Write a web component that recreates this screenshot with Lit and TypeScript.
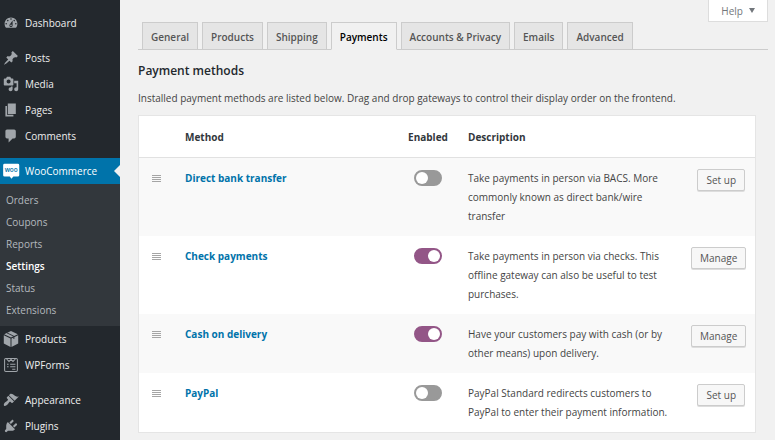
import { LitElement, html, svg, css, nothing } from "lit";
import { customElement, property, state } from "lit/decorators.js";
import { classMap } from "lit/directives/class-map.js";

const icons: Record<string, unknown> = {
  dashboard: svg`<path d="M3.76 16h12.48c1.1-1.37 1.76-3.11 1.76-5 0-4.42-3.58-8-8-8s-8 3.58-8 8c0 1.89.66 3.63 1.76 5zM10 4c.55 0 1 .45 1 1s-.45 1-1 1-1-.45-1-1 .45-1 1-1zM6 6c.55 0 1 .45 1 1s-.45 1-1 1-1-.45-1-1 .45-1 1-1zm8 0c.55 0 1 .45 1 1s-.45 1-1 1-1-.45-1-1 .45-1 1-1zm-5.37 5.55L12 7v6c0 1.1-.9 2-2 2s-2-.9-2-2c0-.57.24-1.08.63-1.45zM4 10c.55 0 1 .45 1 1s-.45 1-1 1-1-.45-1-1 .45-1 1-1zm12 0c.55 0 1 .45 1 1s-.45 1-1 1-1-.45-1-1 .45-1 1-1zm-5 3c0-.55-.45-1-1-1s-1 .45-1 1 .45 1 1 1 1-.45 1-1z"/>`,
  posts: svg`<path d="M10.44 3.02l1.82-1.82 6.36 6.35-1.83 1.82c-1.05-.68-2.48-.57-3.41.36l-.75.75c-.92.93-1.04 2.35-.35 3.41l-1.83 1.82-2.41-2.41-2.8 2.79c-.42.42-3.38 2.71-3.8 2.29s1.86-3.39 2.28-3.81l2.79-2.79L4.1 9.36l1.83-1.82c1.05.69 2.48.57 3.4-.36l.75-.75c.93-.92 1.05-2.35.36-3.41z"/>`,
  media: svg`<path fill-rule="evenodd" d="M13 11V4c0-.55-.45-1-1-1h-1.67L9 1H5L3.67 3H2c-.55 0-1 .45-1 1v7c0 .55.45 1 1 1h10c.55 0 1-.45 1-1zM7 4.5c1.38 0 2.5 1.12 2.5 2.5S8.38 9.5 7 9.5 4.5 8.38 4.5 7 5.62 4.5 7 4.5zM14 6h5v10.5c0 1.38-1.12 2.5-2.5 2.5S14 17.88 14 16.5s1.12-2.5 2.5-2.5c.17 0 .34.02.5.05V9h-3V6zm-4 8.05V13h2v3.5c0 1.38-1.12 2.5-2.5 2.5S7 17.88 7 16.5 8.12 14 9.5 14c.17 0 .34.02.5.05z"/>`,
  pages: svg`<path d="M6 15V2h10v13H6zm-1 1h8v2H3V5h2v11z"/>`,
  comments: svg`<path d="M5 2h9c1.1 0 2 .9 2 2v7c0 1.1-.9 2-2 2h-2l-5 5v-5H5c-1.1 0-2-.9-2-2V4c0-1.1.9-2 2-2z"/>`,
  products: svg`<path d="M10 0 18.5 4 10 8.2 1.5 4zM1 5.2 9.4 9.3V20L1 15.6zM19 5.2 10.6 9.3V20L19 15.6z"/><path d="M5 2.4 13.6 6.6V10" fill="none" stroke="#23282d" stroke-width="1.1"/>`,
  wpforms: svg`<g fill="none" stroke="currentColor" stroke-width="1.3"><rect x="2" y="2" width="16" height="16" rx="1.5"/><path d="M4.5 2.5 7.5 5.5 10 3 12.5 5.5 15.5 2.5M5 9h2M9 9h6.5M5 12.2h2M9 12.2h6.5M11.5 15.3h4"/></g>`,
  appearance: svg`<path d="M14.48 11.06L7.41 3.99l1.5-1.5c.5-.56 2.3-.47 3.51.32 1.21.8 1.43 1.28 2.91 2.1 1.18.64 2.45 1.26 4.45.85zm-.71.71L6.7 4.7 4.93 6.47c-.39.39-.39 1.02 0 1.41l1.06 1.06c.39.39.39 1.03 0 1.42-.6.6-1.43 1.11-2.21 1.69-.35.26-.7.53-1.01.84C1.43 14.23.4 16.08 1.4 17.07c.99 1 2.84-.03 4.18-1.36.31-.31.58-.66.85-1.02.57-.78 1.08-1.61 1.69-2.21.39-.39 1.02-.39 1.41 0l1.06 1.06c.39.39 1.02.39 1.41 0z"/>`,
  plugins: svg`<path d="M13.11 4.36L9.87 7.6 8 5.73l3.24-3.24c.35-.34 1.05-.2 1.56.32.52.51.66 1.21.31 1.55zm-8 1.77l.91-1.12 9.01 9.01-1.19.84c-.71.71-2.63 1.16-3.82 1.16H6.14L4.9 17.26c-.59.59-1.54.59-2.12 0-.59-.58-.59-1.53 0-2.12l1.24-1.24v-3.88c0-1.13.4-3.19 1.09-3.89zm7.26 3.97l3.24-3.24c.34-.35 1.04-.21 1.55.31.52.51.66 1.21.31 1.55l-3.24 3.25z"/>`,
  woocommerce: svg`<path fill="#fff" d="M2 1h16.5a1.8 1.8 0 0 1 1.8 1.8v12.4a1.8 1.8 0 0 1-1.8 1.8H13l-2.5 2.8L8.5 17H2A1.8 1.8 0 0 1 .2 15.2V2.8A1.8 1.8 0 0 1 2 1z"/><text x="10.2" y="11" text-anchor="middle" font-size="8" font-weight="600" fill="#0073aa">woo</text>`,
};

interface MenuItem {
  label: string;
  icon: string;
  children?: string[];
}

const menu: MenuItem[][] = [
  [{ label: "Dashboard", icon: "dashboard" }],
  [
    { label: "Posts", icon: "posts" },
    { label: "Media", icon: "media" },
    { label: "Pages", icon: "pages" },
    { label: "Comments", icon: "comments" },
  ],
  [
    {
      label: "WooCommerce",
      icon: "woocommerce",
      children: ["Orders", "Coupons", "Reports", "Settings", "Status", "Extensions"],
    },
    { label: "Products", icon: "products" },
    { label: "WPForms", icon: "wpforms" },
  ],
  [
    { label: "Appearance", icon: "appearance" },
    { label: "Plugins", icon: "plugins" },
  ],
];

@customElement("admin-menu")
export class AdminMenu extends LitElement {
  static styles = css`
    :host {
      display: block;
      background: #23282d;
      color: #eee;
      padding-top: 10px;
    }
    ul {
      list-style: none;
      margin: 0;
      padding: 0;
    }
    .group + .group {
      margin-top: 9px;
    }
    .item {
      position: relative;
      display: flex;
      align-items: center;
      gap: 6px;
      height: 26px;
      padding-left: 3px;
      color: inherit;
      text-decoration: none;
    }
    .icon {
      width: 16px;
      height: 16px;
      fill: currentColor;
      color: #a0a5aa;
      overflow: visible;
    }
    .current {
      background: #0073aa;
      color: #fff;
    }
    .current::after {
      content: "";
      position: absolute;
      right: 0;
      top: 7px;
      border: 6px solid transparent;
      border-left-width: 0;
      border-right-color: #f1f1f1;
    }
    .submenu {
      background: #32373c;
      padding: 5px 0;
    }
    .sub {
      display: block;
      padding-left: 6px;
      line-height: 22px;
      color: #b4b9be;
      text-decoration: none;
    }
    .active {
      color: #fff;
      font-weight: 600;
    }
  `;

  render() {
    return html`<nav aria-label="Main menu">
      ${menu.map(
        (group) => html`<ul class="group">
          ${group.map(
            (item) => html`<li>
              <a href="#" class=${classMap({ item: true, current: !!item.children })}>
                <svg class="icon" viewBox="0 0 20 20" aria-hidden="true">${icons[item.icon]}</svg>
                <span>${item.label}</span>
              </a>
              ${item.children
                ? html`<ul class="submenu">
                    ${item.children.map(
                      (c) => html`<li><a href="#" class=${classMap({ sub: true, active: c === "Settings" })}>${c}</a></li>`
                    )}
                  </ul>`
                : nothing}
            </li>`
          )}
        </ul>`
      )}
    </nav>`;
  }
}

@customElement("settings-tabs")
export class SettingsTabs extends LitElement {
  @property() current = "Payments";

  static styles = css`
    .tabs {
      display: flex;
      gap: 4px;
      padding-left: 4px;
      border-bottom: 1px solid #ccc;
    }
    .tab {
      box-sizing: border-box;
      height: 28px;
      margin-bottom: -1px;
      padding: 0 8px;
      border: 1px solid #ccc;
      background: #e5e5e5;
      color: #555;
      font-weight: 600;
      line-height: 28px;
      text-decoration: none;
      white-space: nowrap;
    }
    .current {
      background: #f1f1f1;
      border-bottom-color: #f1f1f1;
      color: #000;
    }
  `;

  render() {
    const tabs = ["General", "Products", "Shipping", "Payments", "Accounts & Privacy", "Emails", "Advanced"];
    return html`<nav class="tabs" aria-label="Settings sections">
      ${tabs.map((t) => html`<a href="#" class=${classMap({ tab: true, current: t === this.current })}>${t}</a>`)}
    </nav>`;
  }
}

interface Gateway {
  name: string;
  enabled: boolean;
  description: string;
  action: string;
}

@customElement("gateway-table")
export class GatewayTable extends LitElement {
  @state() private gateways: Gateway[] = [
    {
      name: "Direct bank transfer",
      enabled: false,
      description: "Take payments in person via BACS. More commonly known as direct bank/wire transfer",
      action: "Set up",
    },
    {
      name: "Check payments",
      enabled: true,
      description: "Take payments in person via checks. This offline gateway can also be useful to test purchases.",
      action: "Manage",
    },
    {
      name: "Cash on delivery",
      enabled: true,
      description: "Have your customers pay with cash (or by other means) upon delivery.",
      action: "Manage",
    },
    {
      name: "PayPal",
      enabled: false,
      description: "PayPal Standard redirects customers to PayPal to enter their payment information.",
      action: "Set up",
    },
  ];

  static styles = css`
    table {
      width: 100%;
      table-layout: fixed;
      border-collapse: separate;
      border-spacing: 0;
      border: 1px solid #e5e5e5;
      background: #fff;
    }
    th {
      height: 41px;
      padding: 0 0 0 10px;
      border-bottom: 1px solid #e1e1e1;
      color: #32373c;
      font-weight: 700;
      text-align: left;
    }
    td {
      padding: 11px 0 10px 10px;
      vertical-align: top;
      line-height: 19px;
    }
    tbody tr:nth-child(odd) {
      background: #f9f9f9;
    }
    .sort {
      width: 26px;
    }
    .action {
      width: 64px;
    }
    td.action {
      padding-right: 10px;
      text-align: right;
    }
    .status,
    td.status {
      width: 50px;
      padding-left: 5px;
      padding-right: 5px;
      text-align: center;
    }
    .handle {
      display: flex;
      flex-direction: column;
      gap: 1px;
      width: 9px;
      margin: 6px 0 0 3px;
      padding: 0;
      border: 0;
      background: none;
      cursor: move;
    }
    .bar {
      width: 9px;
      height: 1px;
      background: #a5a5a5;
    }
    .name {
      color: #0073aa;
      font-weight: 700;
      text-decoration: none;
    }
    .toggle {
      appearance: none;
      display: block;
      box-sizing: border-box;
      width: 28px;
      height: 16px;
      margin: 1px auto 0;
      border: 2px solid #999;
      border-radius: 8px;
      background: #999;
    }
    .toggle::before {
      content: "";
      display: block;
      width: 12px;
      height: 12px;
      border-radius: 50%;
      background: #fff;
    }
    .toggle:checked {
      border-color: #935687;
      background: #935687;
    }
    .toggle:checked::before {
      margin-left: auto;
    }
    .button {
      box-sizing: border-box;
      height: 22px;
      padding: 0 8px;
      border: 1px solid #ccc;
      border-radius: 2px;
      background: #f7f7f7;
      box-shadow: 0 1px 0 #ddd;
      color: #555;
      font: inherit;
      line-height: 20px;
      vertical-align: top;
    }
  `;

  private toggle(index: number) {
    this.gateways = this.gateways.map((g, i) => (i === index ? { ...g, enabled: !g.enabled } : g));
  }

  render() {
    return html`<table>
      <thead>
        <tr>
          <th class="sort"></th>
          <th>Method</th>
          <th class="status">Enabled</th>
          <th>Description</th>
          <th class="action"></th>
        </tr>
      </thead>
      <tbody>
        ${this.gateways.map(
          (g, i) => html`<tr>
            <td class="sort">
              <button class="handle" aria-label="Reorder ${g.name}">
                <span class="bar"></span><span class="bar"></span><span class="bar"></span><span class="bar"></span>
              </button>
            </td>
            <td><a class="name" href="#">${g.name}</a></td>
            <td class="status">
              <input
                class="toggle"
                type="checkbox"
                role="switch"
                aria-label="Enable ${g.name}"
                .checked=${g.enabled}
                @change=${() => this.toggle(i)}
              />
            </td>
            <td>${g.description}</td>
            <td class="action"><button class="button">${g.action}</button></td>
          </tr>`
        )}
      </tbody>
    </table>`;
  }
}

@customElement("app-root")
export class AppRoot extends LitElement {
  static styles = css`
    :host {
      display: flex;
      min-height: 100vh;
      background: #f1f1f1;
      color: #444;
      font-family: "Open Sans", "Noto Sans", sans-serif;
      font-size: 10px;
    }
    admin-menu {
      flex: 0 0 120px;
    }
    main {
      flex: 1;
      min-width: 0;
      padding: 0 7px 0 18px;
    }
    .top {
      display: flex;
      justify-content: flex-end;
    }
    .help {
      box-sizing: border-box;
      display: flex;
      align-items: center;
      gap: 6px;
      height: 22px;
      padding: 0 12px;
      border: 1px solid #ddd;
      border-top: 0;
      background: #fff;
      color: #72777c;
      font: inherit;
    }
    .arrow {
      border: 3px solid transparent;
      border-top: 5px solid #72777c;
      border-bottom: 0;
    }
    h1 {
      margin: 11px 0 8px;
      color: #23282d;
      font-size: 12px;
      font-weight: 600;
      line-height: 20px;
    }
    p {
      margin: 0 0 8px;
      line-height: 18px;
    }
    gateway-table {
      display: block;
      margin-right: 12px;
    }
  `;

  render() {
    return html`
      <admin-menu></admin-menu>
      <main>
        <div class="top"><button class="help">Help <span class="arrow"></span></button></div>
        <settings-tabs></settings-tabs>
        <h1>Payment methods</h1>
        <p>Installed payment methods are listed below. Drag and drop gateways to control their display order on the frontend.</p>
        <gateway-table></gateway-table>
      </main>
    `;
  }
}
